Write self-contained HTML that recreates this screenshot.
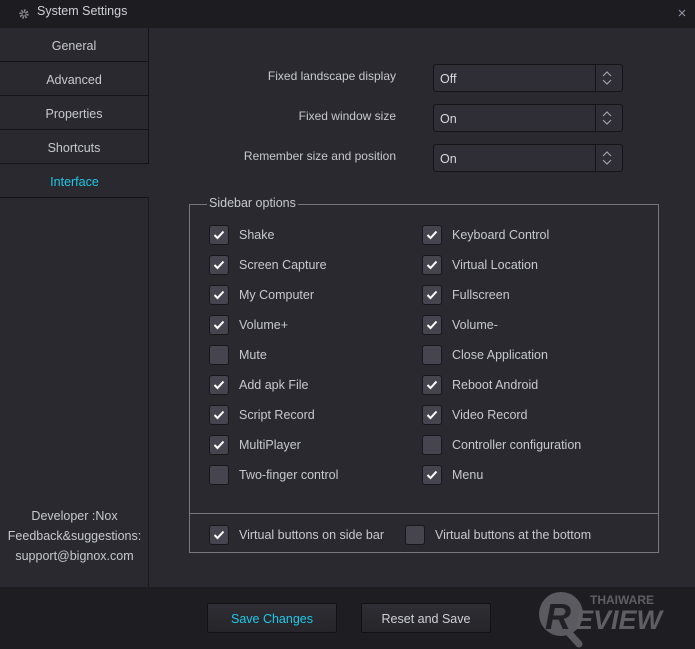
<!DOCTYPE html>
<html><head><meta charset="utf-8"><style>
*{margin:0;padding:0;box-sizing:border-box}
body{width:695px;height:649px;background:#29292f;font-family:"Liberation Sans",sans-serif;font-size:12px;color:#c8c8d0;position:relative;overflow:hidden}
.title{position:absolute;left:0;top:0;width:695px;height:28px;background:#1c1c21}
.title span{position:absolute;left:37px;top:4px;font-size:12.5px;color:#d0d0d8}
.side{position:absolute;left:0;top:28px;width:149px;height:559px;border-right:1px solid #1a1a1e}
.tab{position:absolute;left:0;width:149px;height:34px;border-bottom:1px solid #151518;border-right:1px solid #151518;text-align:center;line-height:36px;font-size:12.5px;color:#c8c8d0}
.tab.act{color:#1ec8e8;border-right:none;background:#29292f}
.info{position:absolute;left:0;width:149px;text-align:center;font-size:12.5px;color:#c8c8d0}
.lbl{position:absolute;right:299px;font-size:12px;color:#c8c8d0}
.dd{position:absolute;left:433px;width:190px;height:28px;border:1px solid #141417;background:#2f2e36;border-radius:3px}
.dd span{position:absolute;left:6px;top:7px;font-size:12.5px;color:#d8d8e0}
.dd i{position:absolute;left:161px;top:0;width:1px;height:26px;background:#141417}
.dd svg{position:absolute;left:167px;top:5px}
.grp{position:absolute;left:189px;top:204px;width:470px;height:349px;border:1px solid #77777e}
.grp .leg{position:absolute;left:17px;top:-9px;background:#29292f;padding:0 2px;font-size:12.5px;color:#c8c8d0}
.sep{position:absolute;left:189px;top:513px;width:470px;height:1px;background:#77777e}
.cb{position:absolute;width:20px;height:20px;background:#45444f;border:1px solid #18181c;border-radius:3px}
.cb svg{position:absolute;left:3px;top:4px}
.cl{position:absolute;font-size:12.5px;color:#c8c8d0}
.bot{position:absolute;left:0;top:587px;width:695px;height:62px;background:#1e1e22}
.btn{position:absolute;top:603px;width:130px;height:30px;border:1px solid #121215;background:linear-gradient(#2e2e34,#25252a);text-align:center;line-height:30px;font-size:12.5px;border-radius:2px}
</style></head><body>
<div class="title">
<svg style="position:absolute;left:18px;top:8px" width="12" height="12" viewBox="0 0 12 12"><circle cx="6" cy="6" r="3.6" fill="none" stroke="#888" stroke-width="2.2" stroke-dasharray="1.6 1.2"/><circle cx="6" cy="6" r="2" fill="none" stroke="#888" stroke-width="1"/></svg>
<span>System Settings</span>
<svg style="position:absolute;left:678px;top:9px" width="8" height="8" viewBox="0 0 8 8"><path d="M1 1L7 7M7 1L1 7" stroke="#9090a0" stroke-width="1.2"/></svg>
</div>
<div class="side">
<div class="tab" style="top:0">General</div>
<div class="tab" style="top:34px">Advanced</div>
<div class="tab" style="top:68px">Properties</div>
<div class="tab" style="top:102px">Shortcuts</div>
<div class="tab act" style="top:136px">Interface</div>
<div class="info" style="top:481px">Developer :Nox</div>
<div class="info" style="top:501px">Feedback&amp;suggestions:</div>
<div class="info" style="top:521px">support@bignox.com</div>
</div>
<div class="lbl" style="top:69px">Fixed landscape display</div>
<div class="lbl" style="top:109px">Fixed window size</div>
<div class="lbl" style="top:149px">Remember size and position</div>
<div class="dd" style="top:64px"><span>Off</span><i></i><svg width="12" height="16" viewBox="0 0 12 16"><path d="M2 6L6 2L10 6M2 10L6 14L10 10" fill="none" stroke="#a0a0a8" stroke-width="1.2"/></svg></div>
<div class="dd" style="top:104px"><span>On</span><i></i><svg width="12" height="16" viewBox="0 0 12 16"><path d="M2 6L6 2L10 6M2 10L6 14L10 10" fill="none" stroke="#a0a0a8" stroke-width="1.2"/></svg></div>
<div class="dd" style="top:144px"><span>On</span><i></i><svg width="12" height="16" viewBox="0 0 12 16"><path d="M2 6L6 2L10 6M2 10L6 14L10 10" fill="none" stroke="#a0a0a8" stroke-width="1.2"/></svg></div>
<div class="grp"><div class="leg">Sidebar options</div></div>
<div class="sep"></div>
<div id="cbs"></div>
<script>
var L=[["Shake",1,"Keyboard Control",1],["Screen Capture",1,"Virtual Location",1],["My Computer",1,"Fullscreen",1],["Volume+",1,"Volume-",1],["Mute",0,"Close Application",0],["Add apk File",1,"Reboot Android",1],["Script Record",1,"Video Record",1],["MultiPlayer",1,"Controller configuration",0],["Two-finger control",0,"Menu",1]];
var ck='<svg width="12" height="10" viewBox="0 0 12 10"><path d="M1.5 5L4.5 8L10.5 1.5" fill="none" stroke="#fff" stroke-width="2"/></svg>';
var h='';
function c(x,y,on,t,lx){h+='<div class="cb" style="left:'+x+'px;top:'+(y-10)+'px">'+(on?ck:'')+'</div><div class="cl" style="left:'+lx+'px;top:'+(y-7)+'px">'+t+'</div>';}
L.forEach(function(r,i){var y=235+30*i;c(209,y,r[1],r[0],239);c(422,y,r[3],r[2],452);});
c(209,535,1,"Virtual buttons on side bar",239);c(405,535,0,"Virtual buttons at the bottom",435);
document.getElementById('cbs').innerHTML=h;
</script>
<div class="bot"></div>
<div class="btn" style="left:207px;color:#1ec8e8">Save Changes</div>
<div class="btn" style="left:361px;color:#d0d0d8">Reset and Save</div>
<svg style="position:absolute;left:535px;top:583px" width="160" height="66" viewBox="0 0 160 66">
<circle cx="26" cy="31" r="22" fill="#5a5a60"/>
<path d="M34 50L44 61" stroke="#5a5a60" stroke-width="7" stroke-linecap="round"/>
<text x="10" y="46" font-family="Liberation Sans" font-weight="bold" font-style="italic" font-size="36" fill="#222226">R</text>
<text x="55" y="21" font-family="Liberation Sans" font-weight="bold" font-size="12" fill="#5e5e64">THAIWARE</text>
<text x="40" y="46" font-family="Liberation Sans" font-weight="bold" font-style="italic" font-size="27" fill="#5e5e64">EVIEW</text>
</svg>
</body></html>
